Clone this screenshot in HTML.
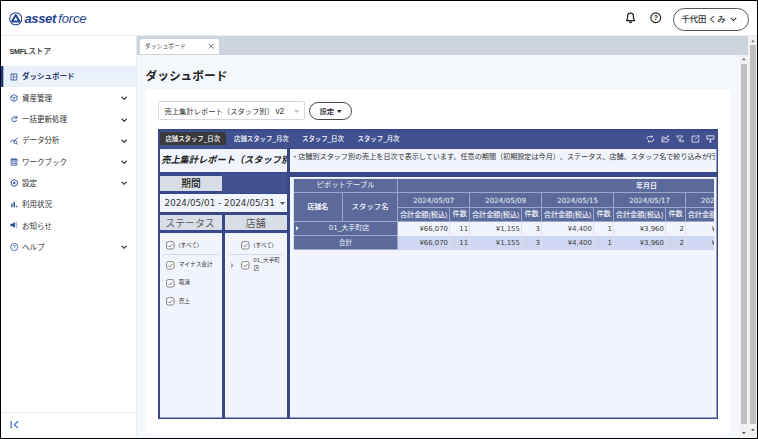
<!DOCTYPE html>
<html lang="ja">
<head>
<meta charset="utf-8">
<title>ダッシュボード</title>
<style>
*{box-sizing:border-box;margin:0;padding:0}
html,body{width:758px;height:439px;overflow:hidden;background:#fff}
body{font-family:"Liberation Sans","Noto Sans CJK JP",sans-serif;color:#333;position:relative}
.abs{position:absolute}
#frame{position:absolute;left:0;top:0;width:758px;height:439px;border-style:solid;border-color:#000;border-width:1px 1px 1px 1px;z-index:50;pointer-events:none}
/* header */
#header{left:1px;top:1px;width:756px;height:35px;background:#fff;border-bottom:1px solid #ececee}
.logo-text{left:24.4px;top:9.9px;font-size:13.1px;line-height:18px;color:#1f4690;font-style:italic;white-space:nowrap;letter-spacing:-0.38px}
.logo-text b{font-weight:700}
.logo-text i{font-weight:400;letter-spacing:-0.17px;margin-left:2.2px}
#user{left:673px;top:8px;width:76px;height:22.5px;border:1px solid #555;border-radius:12px;background:#fff}
#user span{position:absolute;left:7.4px;top:0;line-height:21.5px;font-size:8.3px;color:#333;white-space:nowrap;font-weight:500}
/* sidebar */
#sidebar{left:1px;top:36px;width:136px;height:401px;background:#fff;border-right:1px solid #e6e9ee}
#store{left:9.5px;top:44.8px;font-size:7.6px;line-height:14px;font-weight:500;color:#333;white-space:nowrap}
.active-bg{left:1px;top:66px;width:135px;height:21px;background:#eaf1fb}
.active-bar{left:1px;top:66px;width:3px;height:21px;background:linear-gradient(90deg,#1c3a85 0,#1c3a85 2px,rgba(28,58,133,.35) 2px)}
.mi{position:absolute;left:22px;height:14px;line-height:14px;font-size:7.5px;font-weight:400;color:#2e2e2e;white-space:nowrap}
.mi.on{font-weight:700;color:#2a3768}
.ico{position:absolute;left:9.6px;overflow:visible;width:8px;height:8px}
.chev{position:absolute;left:121px;width:6.4px;height:4.27px}
#sbline{left:1px;top:412px;width:135px;height:1px;background:#efefef}
/* main */
#tabbar{left:137px;top:36px;width:611px;height:18.5px;background:#ced4dd}
#tab{left:139.6px;top:38.8px;width:79.6px;height:15.7px;background:#fff;border-radius:3px 3px 0 0}
#tab span{position:absolute;left:5.2px;top:0.2px;line-height:15px;font-size:5.9px;color:#444;white-space:nowrap}
#content{left:137px;top:54.5px;width:603px;height:383px;background:#f4f7fc}
#title{left:145.5px;top:65.5px;font-size:11.7px;line-height:20px;font-weight:700;color:#222;white-space:nowrap}
#card{left:145px;top:89px;width:586px;height:345px;background:#fff;border-radius:4px}
#sel{left:158px;top:101px;width:146.6px;height:19.4px;border:1px solid #d5d9e0;border-radius:2px;background:#fff}
#sel span{position:absolute;left:5.5px;top:-0.3px;line-height:18px;font-size:7.3px;color:#333;white-space:nowrap}
#btn{left:309px;top:101.6px;width:43px;height:18.6px;border:1px solid #4a4a4a;border-radius:10px;background:#fff}
#btn span{position:absolute;left:9.5px;top:0;line-height:17px;font-size:7.3px;color:#222;white-space:nowrap;font-weight:500}
/* scrollbars */
.sb{background:#f1f1f1}
.thumb{background:#c1c1c1}
/* dashboard */
#dash{left:158px;top:129px;width:560.2px;height:290.3px;background:#39488b}
.dt{position:absolute;top:3.5px;height:12.5px;line-height:12px;font-size:6.4px;color:#fff;white-space:nowrap;font-weight:500}
.box{position:absolute;background:#f1f4fd}
.lab{position:absolute;background:#d9dde5;text-align:center;color:#222;white-space:nowrap}
.dj{font-family:"DejaVu Sans","Noto Sans CJK JP",sans-serif}
.cb{position:absolute;width:8px;height:8px;border:0.9px solid #666;border-radius:1.6px;background:#fff}
.cb svg{position:absolute;left:0;top:0;width:6.2px;height:6.2px}
.ft{position:absolute;font-size:5.7px;line-height:8px;color:#3a3a3a;white-space:nowrap}
.sep{position:absolute;height:1px;background:#d3dcf0}
/* pivot */
.pc{position:absolute;background:#5c699b;color:#eef0fa;font-size:6.6px;text-align:center;white-space:nowrap;overflow:hidden;border-right:1px solid #9da6cb;border-bottom:1px solid #9da6cb}
.pd{position:absolute;color:#3a3a3a;font-size:6.9px;text-align:right;white-space:nowrap;overflow:hidden;border-right:1px solid #dde1f3}
</style>
</head>
<body>
<!-- HEADER -->
<div id="header" class="abs"></div>
<svg class="abs" style="left:8.8px;top:12.3px;width:13.5px;height:13.5px" viewBox="0 0 27 27">
  <circle cx="13.5" cy="13.5" r="12.1" fill="none" stroke="#1f4690" stroke-width="2.2"/>
  <path d="M13.5 6 L21 18.9 L6 18.9 Z" fill="none" stroke="#1f4690" stroke-width="3.8" stroke-linejoin="round"/>
</svg>
<div class="abs logo-text"><b>asset</b><i>force</i></div>
<svg class="abs" style="left:625.2px;top:12px;width:11px;height:12px" viewBox="0 0 21 23">
  <path d="M10.5 2.2 C6.6 2.2 4.8 5.2 4.8 8.6 L4.8 13 L2.8 16.4 L18.2 16.4 L16.2 13 L16.2 8.6 C16.2 5.2 14.4 2.2 10.5 2.2 Z" fill="none" stroke="#222" stroke-width="2.4" stroke-linejoin="round"/>
  <path d="M8.4 19 Q10.5 21.6 12.6 19" fill="none" stroke="#222" stroke-width="2.4" stroke-linecap="round"/>
</svg>
<svg class="abs" style="left:650.1px;top:12.2px;width:11.5px;height:11.5px" viewBox="0 0 23 23">
  <circle cx="11.5" cy="11.5" r="9.8" fill="none" stroke="#222" stroke-width="2.2"/>
  <text x="11.5" y="16.9" font-size="15" font-weight="700" text-anchor="middle" fill="#333" font-family="Liberation Sans, sans-serif">?</text>
</svg>
<div id="user" class="abs"><span>千代田 くみ</span>
  <svg class="abs" style="left:56.4px;top:8.3px;width:7px;height:4.6px" viewBox="0 0 14 9"><path d="M1.5 1.5 L7 7 L12.5 1.5" fill="none" stroke="#333" stroke-width="2.2"/></svg>
</div>

<!-- SIDEBAR -->
<div id="sidebar" class="abs"></div>
<div id="store" class="abs"><span style="font-size:7.1px;font-weight:700;letter-spacing:-0.15px">SMFL</span>ストア</div>
<div class="abs active-bg"></div>
<div class="abs active-bar"></div>

<div class="mi on" style="top:70.4px">ダッシュボード</div>
<div class="mi" style="top:91.7px">資産管理</div>
<div class="mi" style="top:113.0px">一括更新処理</div>
<div class="mi" style="top:134.3px">データ分析</div>
<div class="mi" style="top:155.6px">ワークブック</div>
<div class="mi" style="top:176.9px">設定</div>
<div class="mi" style="top:198.2px">利用状況</div>
<div class="mi" style="top:219.5px">お知らせ</div>
<div class="mi" style="top:240.8px">ヘルプ</div>

<!-- sidebar icons -->
<svg class="ico" style="top:72.5px" viewBox="0 0 16 16"><path d="M2 2H13.6V14H2Z" fill="none" stroke="#2a4a9a" stroke-width="1.6" stroke-linejoin="round"/><path d="M6.6 2V14M6.6 7.8H13.6" stroke="#2a4a9a" stroke-width="1.4" fill="none"/></svg>
<svg class="ico" style="top:94px" viewBox="0 0 16 16"><path d="M8 1.2 L14.2 4.6 V11.4 L8 14.8 L1.8 11.4 V4.6 Z" fill="none" stroke="#2a4a9a" stroke-width="1.6" stroke-linejoin="miter"/><path d="M1.8 4.6 L8 8 L14.2 4.6 M8 8 V14.8" fill="none" stroke="#2a4a9a" stroke-width="1.4"/></svg>
<svg class="ico" style="top:115.4px" viewBox="0 0 16 16"><path d="M12.6 5.8 A4.8 4.8 0 1 0 13.2 9.8" fill="none" stroke="#2a4a9a" stroke-width="2"/><path d="M13.6 1.8 V6.2 H9.2" fill="none" stroke="#2a4a9a" stroke-width="1.9"/></svg>
<svg class="ico" style="top:136.5px" viewBox="0 0 16 16"><path d="M0.8 9.4 L5 6.2 L8 8.4 L15 1.6" fill="none" stroke="#2a4a9a" stroke-width="2"/><circle cx="10.6" cy="10.6" r="2.9" fill="none" stroke="#2a4a9a" stroke-width="1.6"/><path d="M12.8 12.8 L15.4 15.2" stroke="#2a4a9a" stroke-width="1.8"/></svg>
<svg class="ico" style="top:157.5px" viewBox="0 0 16 16"><rect x="2.2" y="1.8" width="11.8" height="12.6" rx="0.5" fill="#e6ebf7" stroke="#2a4a9a" stroke-width="1.5"/><path d="M3 3.6H13.2" stroke="#2a4a9a" stroke-width="2.6"/><path d="M4.3 8H6.3M7.1 8H9.1M9.9 8H11.9M4.3 11H6.3M7.1 11H9.1M9.9 11H11.9" stroke="#2a4a9a" stroke-width="1.7"/></svg>
<svg class="ico" style="top:179.1px" viewBox="0 0 16 16"><path d="M8.6 1.2 L14.6 4.6 V11.4 L8.6 14.8 L2.6 11.4 V4.6 Z" fill="none" stroke="#2a4a9a" stroke-width="2" stroke-linejoin="round"/><circle cx="8.6" cy="8" r="2.3" fill="#2a4a9a"/></svg>
<svg class="ico" style="top:200.5px" viewBox="0 0 16 16"><path d="M3.8 12.4V5.2M8.4 12.4V1.4M13 12.4V9.4" stroke="#2a4a9a" stroke-width="2.7" fill="none"/></svg>
<svg class="ico" style="top:221.2px" viewBox="0 0 16 16"><path d="M1.6 6 H5 L9.4 3 V13 L5 10 H1.6 Z" fill="#2a4a9a" stroke="#2a4a9a" stroke-width="1.2" stroke-linejoin="round"/><path d="M11.6 4.6L14 3.2M12 8H15M11.6 11.4L14 12.8" stroke="#2a4a9a" stroke-width="1.5"/></svg>
<svg class="ico" style="top:242.9px" viewBox="0 0 16 16"><circle cx="8.6" cy="8" r="7.2" fill="none" stroke="#2a4a9a" stroke-width="1.5"/><text x="8.6" y="11.7" font-size="10.5" font-weight="400" text-anchor="middle" fill="#2a4a9a" font-family="Liberation Sans, sans-serif">?</text></svg>

<!-- chevrons -->
<svg class="chev" style="top:96.2px" viewBox="0 0 12 8"><path d="M1.2 1.4 L6 6.2 L10.8 1.4" fill="none" stroke="#2b2b2b" stroke-width="2.1"/></svg>
<svg class="chev" style="top:117.5px" viewBox="0 0 12 8"><path d="M1.2 1.4 L6 6.2 L10.8 1.4" fill="none" stroke="#2b2b2b" stroke-width="2.1"/></svg>
<svg class="chev" style="top:138.8px" viewBox="0 0 12 8"><path d="M1.2 1.4 L6 6.2 L10.8 1.4" fill="none" stroke="#2b2b2b" stroke-width="2.1"/></svg>
<svg class="chev" style="top:160.1px" viewBox="0 0 12 8"><path d="M1.2 1.4 L6 6.2 L10.8 1.4" fill="none" stroke="#2b2b2b" stroke-width="2.1"/></svg>
<svg class="chev" style="top:181.4px" viewBox="0 0 12 8"><path d="M1.2 1.4 L6 6.2 L10.8 1.4" fill="none" stroke="#2b2b2b" stroke-width="2.1"/></svg>
<svg class="chev" style="top:245.3px" viewBox="0 0 12 8"><path d="M1.2 1.4 L6 6.2 L10.8 1.4" fill="none" stroke="#2b2b2b" stroke-width="2.1"/></svg>

<div id="sbline" class="abs"></div>
<svg class="abs" style="left:9.6px;top:420.2px;width:9.4px;height:9.4px" viewBox="0 0 18 18"><path d="M2.2 1.8V16M15.4 2.4L8.4 9L15.4 15.6" fill="none" stroke="#3763c6" stroke-width="2.2"/></svg>

<!-- MAIN -->
<div id="tabbar" class="abs"></div>
<div id="content" class="abs"></div>
<div id="tab" class="abs"><span>ダッシュボード</span>
  <svg class="abs" style="left:68.6px;top:4.3px;width:6.4px;height:6.4px" viewBox="0 0 12 12"><path d="M1.5 1.5L10.5 10.5M10.5 1.5L1.5 10.5" stroke="#444" stroke-width="1.4"/></svg>
</div>
<div id="title" class="abs">ダッシュボード</div>
<div id="card" class="abs"></div>
<div id="sel" class="abs"><span>売上集計レポート（スタッフ別）<span style="position:static;font-size:8.3px;margin-left:1.5px">v2</span></span>
  <svg class="abs" style="left:134.5px;top:7.6px;width:5px;height:3px" viewBox="0 0 10 6"><path d="M0 0H10L5 6Z" fill="#bdbdbd"/></svg>
</div>
<div id="btn" class="abs"><span>設定</span>
  <svg class="abs" style="left:27px;top:7.2px;width:4.6px;height:3px" viewBox="0 0 10 6"><path d="M0 0H10L5 6Z" fill="#222"/></svg>
</div>

<!-- scrollbars -->
<div class="abs sb" style="left:740px;top:54.5px;width:8px;height:382.5px"></div>
<div class="abs thumb" style="left:741px;top:64px;width:6px;height:360px"></div>
<svg class="abs" style="left:742.2px;top:58.4px;width:3.8px;height:2.2px" viewBox="0 0 10 6"><path d="M0 6H10L5 0Z" fill="#6a6a6a"/></svg>
<svg class="abs" style="left:742.2px;top:431.6px;width:3.8px;height:2.2px" viewBox="0 0 10 6"><path d="M0 0H10L5 6Z" fill="#555"/></svg>
<div class="abs sb" style="left:748px;top:36px;width:8.5px;height:401px"></div>
<div class="abs thumb" style="left:750px;top:45px;width:6px;height:378.5px"></div>
<svg class="abs" style="left:751.2px;top:40px;width:3.8px;height:2.2px" viewBox="0 0 10 6"><path d="M0 6H10L5 0Z" fill="#6a6a6a"/></svg>
<svg class="abs" style="left:751.2px;top:429.2px;width:3.8px;height:2.2px" viewBox="0 0 10 6"><path d="M0 0H10L5 6Z" fill="#555"/></svg>

<!-- DASHBOARD -->
<div id="dash" class="abs">
<div class="abs" style="left:1.5px;top:1.5px;width:557.5px;height:17.9px;background:#41508e"></div>
<div class="abs" style="left:64.1px;top:44.4px;width:65.2px;height:19.6px;background:#41508e"></div>
<div class="abs" style="left:2.2px;top:3.4px;width:65.6px;height:12.8px;background:#3a3a3c;border-radius:1px"></div>
<div class="dt" style="left:7.4px">店舗スタッフ_日次</div>
<div class="dt" style="left:76px">店舗スタッフ_月次</div>
<div class="dt" style="left:144px">スタッフ_日次</div>
<div class="dt" style="left:199.6px">スタッフ_月次</div>
<svg class="abs" style="left:487.8px;top:5.7px;width:8.5px;height:8.5px;overflow:visible" viewBox="0 0 16 16"><path d="M2 8.2V6A3 3 0 0 1 5 3H12M9.6 0.6L12.2 3L9.6 5.4" fill="none" stroke="#eef0fa" stroke-width="1.5"/><path d="M14 6.8V9A3 3 0 0 1 11 12H4M6.4 9.6L3.8 12L6.4 14.4" fill="none" stroke="#eef0fa" stroke-width="1.5"/></svg>
<svg class="abs" style="left:502.9px;top:5.7px;width:8.5px;height:8.5px;overflow:visible" viewBox="0 0 16 16"><path d="M2 13V3.6H5.6L7 5.2H9.4" fill="none" stroke="#eef0fa" stroke-width="1.4"/><path d="M2 13L4.4 7.6H15L12.6 13Z" fill="none" stroke="#eef0fa" stroke-width="1.4" stroke-linejoin="round"/><path d="M9.6 5.6C10.4 3.4 12 2.4 14.4 2.2M12.4 0.4L14.8 2.2L12.8 4.4" fill="none" stroke="#eef0fa" stroke-width="1.3"/></svg>
<svg class="abs" style="left:517.9px;top:5.7px;width:8.5px;height:8.5px;overflow:visible" viewBox="0 0 16 16"><path d="M1.2 1.8H13.2L8.4 7.4V13L6 11.6V7.4Z" fill="none" stroke="#eef0fa" stroke-width="1.4" stroke-linejoin="round"/><path d="M10.6 9.4L15 13.8M15 9.4L10.6 13.8" stroke="#eef0fa" stroke-width="1.4"/></svg>
<svg class="abs" style="left:533px;top:5.7px;width:8.5px;height:8.5px;overflow:visible" viewBox="0 0 16 16"><path d="M9 2H2V13.4H14.6V7" fill="none" stroke="#eef0fa" stroke-width="1.5"/><path d="M7.4 8.6L14.4 1.6M10.4 1.4H14.8V5.8" fill="none" stroke="#eef0fa" stroke-width="1.4"/></svg>
<svg class="abs" style="left:547.6px;top:5.7px;width:8.5px;height:8.5px;overflow:visible" viewBox="0 0 16 16"><path d="M1.6 1.6H15V7.6H1.6Z" fill="none" stroke="#eef0fa" stroke-width="1.6"/><path d="M8.3 7.6V12.6M5.6 13H11" fill="none" stroke="#eef0fa" stroke-width="1.6"/></svg>
<div class="box" style="left:2.2px;top:20.4px;width:127.1px;height:23px;overflow:hidden"><span style="position:absolute;left:1px;top:0;line-height:23px;font-size:9.2px;font-weight:700;font-style:italic;color:#222;white-space:nowrap;letter-spacing:0.02px">売上集計レポート（スタッフ別）</span></div>
<div class="box" style="left:132.4px;top:20.4px;width:426.6px;height:23px;overflow:hidden"><span style="position:absolute;left:0.8px;top:2.2px;line-height:10px;font-size:7.1px;text-spacing-trim:space-all;color:#333;white-space:nowrap">・店舗別スタッフ別の売上を日次で表示しています。任意の期間（初期設定は今月）、ステータス、店舗、スタッフ名で絞り込みが行えます。</span></div>
<div class="lab" style="left:1.8px;top:47.1px;width:62.3px;height:14.5px;font-size:9.7px;line-height:16.3px;font-weight:500">期間</div>
<div class="box dj" style="left:2.2px;top:65px;width:127.1px;height:18px;"><span style="position:absolute;left:4.4px;top:0;line-height:18px;font-size:8.8px;color:#333;white-space:nowrap">2024/05/01 - 2024/05/31</span><svg class="abs" style="left:120px;top:8px;width:5px;height:3px" viewBox="0 0 10 6"><path d="M0 0H10L5 6Z" fill="#555"/></svg></div>
<div class="lab" style="left:1.8px;top:86px;width:62.3px;height:14.9px;font-size:9.9px;line-height:17.6px;font-weight:300;color:#111;text-indent:-2px">ステータス</div>
<div class="lab" style="left:67.2px;top:86px;width:62.1px;height:14.9px;font-size:9.9px;line-height:17.6px;font-weight:300;color:#111;text-indent:-1px">店舗</div>
<div class="box" style="left:2.2px;top:103.9px;width:61.9px;height:184.3px;"></div>
<div class="box" style="left:67.2px;top:103.9px;width:62.1px;height:184.3px;"></div>
<svg class="abs" style="left:8.1px;top:111.8px;width:9px;height:9px" viewBox="0 0 9 9"><rect x="0.6" y="0.6" width="7.4" height="7.4" rx="1.7" fill="#fff" stroke="#777" stroke-width="0.9"/><path d="M2.3 4.5L3.8 6L6.5 2.9" fill="none" stroke="#555" stroke-width="0.8"/></svg>
<div class="ft" style="left:20.7px;top:111.6px;">(すべて)</div>
<svg class="abs" style="left:8.1px;top:131.5px;width:9px;height:9px" viewBox="0 0 9 9"><rect x="0.6" y="0.6" width="7.4" height="7.4" rx="1.7" fill="#fff" stroke="#777" stroke-width="0.9"/><path d="M2.3 4.5L3.8 6L6.5 2.9" fill="none" stroke="#555" stroke-width="0.8"/></svg>
<div class="ft" style="left:20.7px;top:131.3px;">マイナス会計</div>
<svg class="abs" style="left:8.1px;top:149.6px;width:9px;height:9px" viewBox="0 0 9 9"><rect x="0.6" y="0.6" width="7.4" height="7.4" rx="1.7" fill="#fff" stroke="#777" stroke-width="0.9"/><path d="M2.3 4.5L3.8 6L6.5 2.9" fill="none" stroke="#555" stroke-width="0.8"/></svg>
<div class="ft" style="left:20.7px;top:149.4px;">取消</div>
<svg class="abs" style="left:8.1px;top:167.8px;width:9px;height:9px" viewBox="0 0 9 9"><rect x="0.6" y="0.6" width="7.4" height="7.4" rx="1.7" fill="#fff" stroke="#777" stroke-width="0.9"/><path d="M2.3 4.5L3.8 6L6.5 2.9" fill="none" stroke="#555" stroke-width="0.8"/></svg>
<div class="ft" style="left:20.7px;top:167.6px;">売上</div>
<div class="sep" style="left:5.3px;top:125.1px;width:55.3px"></div>
<svg class="abs" style="left:82.8px;top:111.8px;width:9px;height:9px" viewBox="0 0 9 9"><rect x="0.6" y="0.6" width="7.4" height="7.4" rx="1.7" fill="#fff" stroke="#777" stroke-width="0.9"/><path d="M2.3 4.5L3.8 6L6.5 2.9" fill="none" stroke="#555" stroke-width="0.8"/></svg>
<div class="ft" style="left:95.5px;top:111.6px;">(すべて)</div>
<div class="sep" style="left:70.9px;top:125.1px;width:54.3px"></div>
<svg class="abs" style="left:72.6px;top:134px;width:3px;height:5px" viewBox="0 0 6 10"><path d="M0 0V10L6 5Z" fill="#aaa"/></svg>
<svg class="abs" style="left:82.8px;top:132.2px;width:9px;height:9px" viewBox="0 0 9 9"><rect x="0.6" y="0.6" width="7.4" height="7.4" rx="1.7" fill="#fff" stroke="#777" stroke-width="0.9"/><path d="M2.3 4.5L3.8 6L6.5 2.9" fill="none" stroke="#555" stroke-width="0.8"/></svg>
<div class="ft" style="left:95.5px;top:128.3px;line-height:7.6px;white-space:normal;width:30px">01_大手町<br>店</div>
<div class="abs" style="left:2.2px;top:288px;width:61.9px;height:1px;background:#969ec5"></div>
<div class="abs" style="left:67.2px;top:288px;width:62.1px;height:1px;background:#969ec5"></div>
<div class="abs" style="left:132.4px;top:288px;width:426.6px;height:1px;background:#969ec5"></div>
<div class="box" style="left:132.4px;top:47.5px;width:426.6px;height:240.7px;overflow:hidden" id="pv">
<div class="abs" style="left:2.4px;top:1.7px;width:500px;height:71.9px;background:#dfe3f3"></div>
<div class="pc" style="left:3.4px;top:2.7px;width:104.5px;height:13.9px;line-height:12.9px;font-size:7.3px">ピボットテーブル</div>
<div class="pc" style="left:107.9px;top:2.7px;width:501.7px;height:13.9px;line-height:12.9px;font-size:7px;font-weight:700"><span style="position:absolute;left:237.7px;top:0.8px">年月日</span></div>
<div class="pc" style="left:3.4px;top:16.6px;width:49.1px;height:28.8px;line-height:27.8px;font-weight:700;font-size:7px">店舗名</div>
<div class="pc" style="left:52.5px;top:16.6px;width:55.4px;height:28.8px;line-height:27.8px;font-size:7.4px;font-weight:500">スタッフ名</div>
<div class="pc dj" style="left:107.9px;top:16.6px;width:71.95px;height:14.5px;line-height:13.5px;font-size:7.1px;padding-top:0.5px">2024/05/07</div>
<div class="pc" style="left:107.9px;top:31.1px;width:51.85px;height:14.3px;line-height:13.3px;font-weight:500;font-size:7.2px;letter-spacing:-0.05px">合計金額(税込)</div>
<div class="pc" style="left:159.75px;top:31.1px;width:20.1px;height:14.3px;line-height:13.3px;font-weight:500;font-size:7.1px">件数</div>
<div class="pc dj" style="left:179.85px;top:16.6px;width:71.95px;height:14.5px;line-height:13.5px;font-size:7.1px;padding-top:0.5px">2024/05/09</div>
<div class="pc" style="left:179.85px;top:31.1px;width:51.85px;height:14.3px;line-height:13.3px;font-weight:500;font-size:7.2px;letter-spacing:-0.05px">合計金額(税込)</div>
<div class="pc" style="left:231.7px;top:31.1px;width:20.1px;height:14.3px;line-height:13.3px;font-weight:500;font-size:7.1px">件数</div>
<div class="pc dj" style="left:251.8px;top:16.6px;width:71.95px;height:14.5px;line-height:13.5px;font-size:7.1px;padding-top:0.5px">2024/05/15</div>
<div class="pc" style="left:251.8px;top:31.1px;width:51.85px;height:14.3px;line-height:13.3px;font-weight:500;font-size:7.2px;letter-spacing:-0.05px">合計金額(税込)</div>
<div class="pc" style="left:303.65px;top:31.1px;width:20.1px;height:14.3px;line-height:13.3px;font-weight:500;font-size:7.1px">件数</div>
<div class="pc dj" style="left:323.75px;top:16.6px;width:71.95px;height:14.5px;line-height:13.5px;font-size:7.1px;padding-top:0.5px">2024/05/17</div>
<div class="pc" style="left:323.75px;top:31.1px;width:51.85px;height:14.3px;line-height:13.3px;font-weight:500;font-size:7.2px;letter-spacing:-0.05px">合計金額(税込)</div>
<div class="pc" style="left:375.6px;top:31.1px;width:20.1px;height:14.3px;line-height:13.3px;font-weight:500;font-size:7.1px">件数</div>
<div class="pc dj" style="left:395.7px;top:16.6px;width:71.95px;height:14.5px;line-height:13.5px;font-size:7.1px;padding-top:0.5px">2024/05/20</div>
<div class="pc" style="left:395.7px;top:31.1px;width:51.85px;height:14.3px;line-height:13.3px;font-weight:500;font-size:7.2px;letter-spacing:-0.05px">合計金額(税込)</div>
<div class="pc" style="left:447.55px;top:31.1px;width:20.1px;height:14.3px;line-height:13.3px;font-weight:500;font-size:7.1px">件数</div>
<div class="pc dj" style="left:3.4px;top:45.4px;width:104.5px;height:13.75px;line-height:12.75px;font-size:7px;padding-left:7px">01_大手町店<svg class="abs" style="left:2.2px;top:4.6px;width:2.8px;height:4.4px" viewBox="0 0 6 10"><path d="M0 0V10L6 5Z" fill="#fff"/></svg></div>
<div class="pc" style="left:3.4px;top:59.15px;width:104.5px;height:14.45px;line-height:13.45px;font-size:6.8px">合計</div>
<div class="abs" style="left:107.9px;top:45.4px;width:400px;height:13.75px;background:#f1f4fd"></div>
<div class="pd dj" style="left:107.9px;top:45.4px;width:51.85px;height:13.75px;line-height:12.75px;padding-right:1.2px;padding-top:1px">¥66,070</div>
<div class="pd dj" style="left:159.75px;top:45.4px;width:20.1px;height:13.75px;line-height:12.75px;padding-right:1.2px;padding-top:1px">11</div>
<div class="pd dj" style="left:179.85px;top:45.4px;width:51.85px;height:13.75px;line-height:12.75px;padding-right:1.2px;padding-top:1px">¥1,155</div>
<div class="pd dj" style="left:231.7px;top:45.4px;width:20.1px;height:13.75px;line-height:12.75px;padding-right:1.2px;padding-top:1px">3</div>
<div class="pd dj" style="left:251.8px;top:45.4px;width:51.85px;height:13.75px;line-height:12.75px;padding-right:1.2px;padding-top:1px">¥4,400</div>
<div class="pd dj" style="left:303.65px;top:45.4px;width:20.1px;height:13.75px;line-height:12.75px;padding-right:1.2px;padding-top:1px">1</div>
<div class="pd dj" style="left:323.75px;top:45.4px;width:51.85px;height:13.75px;line-height:12.75px;padding-right:1.2px;padding-top:1px">¥3,960</div>
<div class="pd dj" style="left:375.6px;top:45.4px;width:20.1px;height:13.75px;line-height:12.75px;padding-right:1.2px;padding-top:1px">2</div>
<div class="pd dj" style="left:395.7px;top:45.4px;width:51.85px;height:13.75px;line-height:12.75px;padding-right:1.2px;padding-top:1px">¥4,400</div>
<div class="pd dj" style="left:447.55px;top:45.4px;width:20.1px;height:13.75px;line-height:12.75px;padding-right:1.2px;padding-top:1px">1</div>
<div class="abs" style="left:107.9px;top:59.15px;width:400px;height:14.45px;background:#cfd6f2"></div>
<div class="pd dj" style="left:107.9px;top:59.15px;width:51.85px;height:14.45px;line-height:13.45px;padding-right:1.2px;padding-top:1px">¥66,070</div>
<div class="pd dj" style="left:159.75px;top:59.15px;width:20.1px;height:14.45px;line-height:13.45px;padding-right:1.2px;padding-top:1px">11</div>
<div class="pd dj" style="left:179.85px;top:59.15px;width:51.85px;height:14.45px;line-height:13.45px;padding-right:1.2px;padding-top:1px">¥1,155</div>
<div class="pd dj" style="left:231.7px;top:59.15px;width:20.1px;height:14.45px;line-height:13.45px;padding-right:1.2px;padding-top:1px">3</div>
<div class="pd dj" style="left:251.8px;top:59.15px;width:51.85px;height:14.45px;line-height:13.45px;padding-right:1.2px;padding-top:1px">¥4,400</div>
<div class="pd dj" style="left:303.65px;top:59.15px;width:20.1px;height:14.45px;line-height:13.45px;padding-right:1.2px;padding-top:1px">1</div>
<div class="pd dj" style="left:323.75px;top:59.15px;width:51.85px;height:14.45px;line-height:13.45px;padding-right:1.2px;padding-top:1px">¥3,960</div>
<div class="pd dj" style="left:375.6px;top:59.15px;width:20.1px;height:14.45px;line-height:13.45px;padding-right:1.2px;padding-top:1px">2</div>
<div class="pd dj" style="left:395.7px;top:59.15px;width:51.85px;height:14.45px;line-height:13.45px;padding-right:1.2px;padding-top:1px">¥4,400</div>
<div class="pd dj" style="left:447.55px;top:59.15px;width:20.1px;height:14.45px;line-height:13.45px;padding-right:1.2px;padding-top:1px">1</div>
<div class="abs" style="left:423.6px;top:0;width:10px;height:240.7px;background:#f1f4fd"></div>
</div>
<div class="abs" style="left:558px;top:20.4px;width:1px;height:267.8px;background:rgba(61,75,142,.5)"></div>
</div>
<div id="frame"></div>
</body>
</html>
